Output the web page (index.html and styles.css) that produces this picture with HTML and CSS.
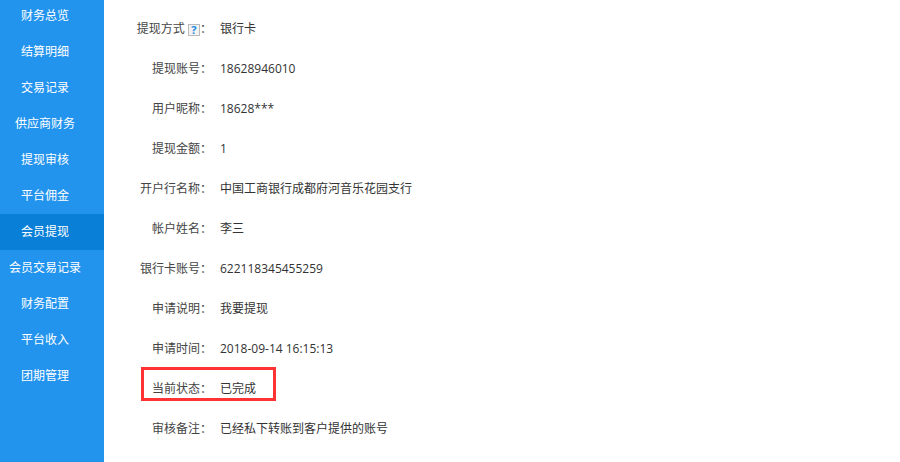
FILE: index.html
```html
<!DOCTYPE html>
<html lang="zh-CN">
<head>
    <meta charset="UTF-8">
    <meta name="viewport" content="width=device-width, initial-scale=1.0">
    <title>会员提现</title>
    <link rel="stylesheet" href="styles.css">
</head>
<body>
    <div class="page">
        <ul class="side-nav">
            <li>财务总览</li>
            <li>结算明细</li>
            <li>交易记录</li>
            <li>供应商财务</li>
            <li>提现审核</li>
            <li>平台佣金</li>
            <li class="active">会员提现</li>
            <li>会员交易记录</li>
            <li>财务配置</li>
            <li>平台收入</li>
            <li>团期管理</li>
        </ul>

        <div class="detail">
            <div class="row">
                <span class="label">提现方式 <i class="help">?</i>：</span>
                <span class="value">银行卡</span>
            </div>
            <div class="row">
                <span class="label">提现账号：</span>
                <span class="value">18628946010</span>
            </div>
            <div class="row">
                <span class="label">用户昵称：</span>
                <span class="value">18628***</span>
            </div>
            <div class="row">
                <span class="label">提现金额：</span>
                <span class="value">1</span>
            </div>
            <div class="row">
                <span class="label">开户行名称：</span>
                <span class="value">中国工商银行成都府河音乐花园支行</span>
            </div>
            <div class="row">
                <span class="label">帐户姓名：</span>
                <span class="value">李三</span>
            </div>
            <div class="row">
                <span class="label">银行卡账号：</span>
                <span class="value">622118345455259</span>
            </div>
            <div class="row">
                <span class="label">申请说明：</span>
                <span class="value">我要提现</span>
            </div>
            <div class="row">
                <span class="label">申请时间：</span>
                <span class="value">2018-09-14 16:15:13</span>
            </div>
            <div class="row status">
                <span class="label">当前状态：</span>
                <span class="value">已完成</span>
                <div class="mark"></div>
            </div>
            <div class="row">
                <span class="label">审核备注：</span>
                <span class="value">已经私下转账到客户提供的账号</span>
            </div>
        </div>
    </div>
</body>
</html>
```

FILE: styles.css
```css
body {
    margin: 0;
    padding: 0;
    font-family: "Open Sans", "Noto Sans CJK SC", sans-serif;
    font-size: 12px;
    color: #333;
    background: #fff;
    overflow: hidden;
}

.page {
    display: flex;
    height: 462px;
}

.side-nav {
    list-style: none;
    margin: 0;
    padding: 0;
    width: 104px;
    flex-shrink: 0;
    background-color: #2394ee;
}

.side-nav li {
    height: 36px;
    line-height: 36px;
    padding-right: 14px;
    text-align: center;
    color: #fff;
    white-space: nowrap;
}

.side-nav li:first-child {
    margin-top: -2px;
}

.side-nav li.active {
    background-color: #0a7fd7;
}

.detail {
    padding-top: 9px;
}

.row {
    position: relative;
    display: flex;
    height: 40px;
    line-height: 40px;
}

.label {
    width: 108px;
    text-align: right;
    color: #444;
}

.value {
    margin-left: 8px;
    color: #333;
}

.help {
    display: inline-block;
    width: 10px;
    height: 10px;
    line-height: 10px;
    border: 1px solid #bbb;
    background: #f2f2f2;
    color: #1a8be0;
    font-style: normal;
    font-weight: bold;
    font-size: 11px;
    text-align: center;
    vertical-align: -1px;
}

/* red highlight drawn over the status row */
.mark {
    position: absolute;
    left: 37px;
    top: -2px;
    width: 129px;
    height: 28px;
    border: 3px solid #ff3333;
}
```
